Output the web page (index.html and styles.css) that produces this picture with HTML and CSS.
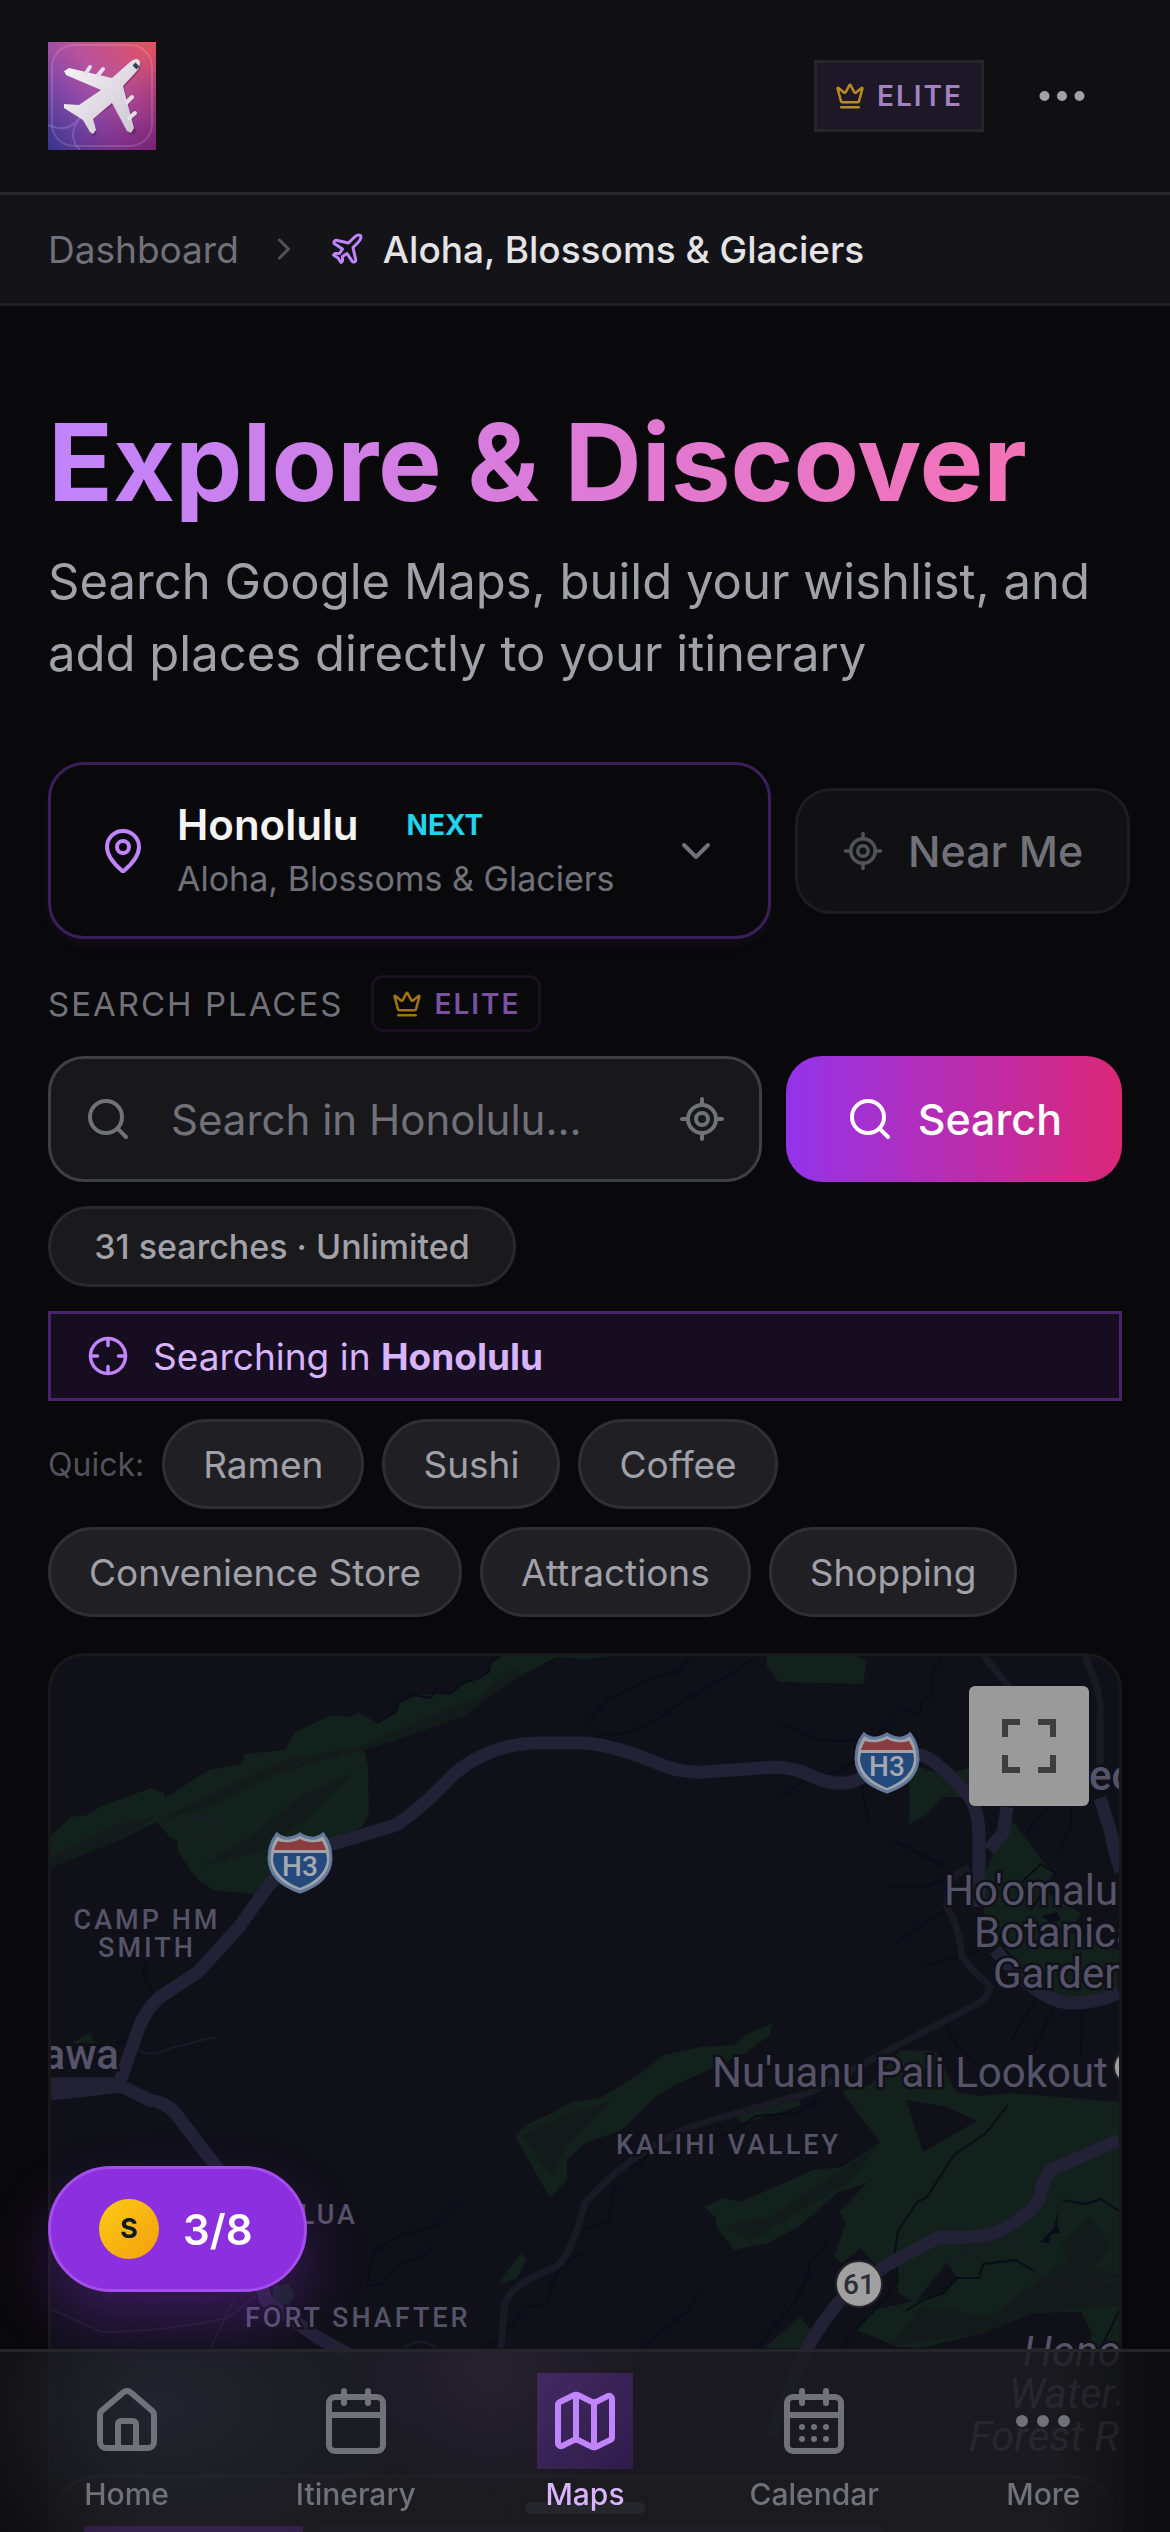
FILE: index.html
```html
<!DOCTYPE html>
<html lang="en">
<head>
    <meta charset="UTF-8">
    <meta name="viewport" content="width=device-width, initial-scale=1.0">
    <title>Explore &amp; Discover</title>
    <link rel="stylesheet" href="styles.css">
</head>
<body>
    <!-- Shared icons -->
    <svg class="sprite" aria-hidden="true">
        <symbol id="crown" viewBox="0 0 24 24">
            <path d="M11.562 3.266a.5.5 0 0 1 .876 0L15.39 8.87a1 1 0 0 0 1.516.294L21.183 5.5a.5.5 0 0 1 .798.519l-2.834 10.246a1 1 0 0 1-.956.734H5.81a1 1 0 0 1-.957-.734L2.02 6.02a.5.5 0 0 1 .798-.519l4.276 3.664a1 1 0 0 0 1.516-.294z"/>
            <path d="M5 21h14"/>
        </symbol>
        <symbol id="dots" viewBox="0 0 24 24">
            <circle cx="12" cy="12" r="1"/><circle cx="19" cy="12" r="1"/><circle cx="5" cy="12" r="1"/>
        </symbol>
        <symbol id="search" viewBox="0 0 24 24">
            <circle cx="11" cy="11" r="8"/><path d="m21 21-4.3-4.3"/>
        </symbol>
        <symbol id="locate" viewBox="0 0 24 24">
            <path d="M2 12h3M19 12h3M12 2v3M12 19v3"/><circle cx="12" cy="12" r="7"/><circle cx="12" cy="12" r="3"/>
        </symbol>
        <symbol id="shield" viewBox="0 0 66 62">
            <path d="M10 2Q16 7 22 6Q29 5 33 2Q37 5 44 6Q50 7 56 2Q64 12 64 27Q63 50 33 60Q3 50 2 27Q2 12 10 2Z" fill="#9fa3aa" stroke="#63799c" stroke-width="3"/>
            <path d="M7 21H59Q60 24 60 28Q58 46 33 56Q8 46 6 28Q6 24 7 21Z" fill="#23497d"/>
            <path d="M11 9Q17 11 24 10Q30 9 33 7Q36 9 42 10Q49 11 55 9Q58 14 59 18H7Q8 14 11 9Z" fill="#8a3c40"/>
        </symbol>
    </svg>

    <header class="topbar">
        <a class="logo" href="#" aria-label="Home">
            <svg viewBox="0 0 108 108">
                <defs>
                    <linearGradient id="logoBg" x1="0" y1="1" x2="1" y2="0">
                        <stop offset="0" stop-color="#33348c"/>
                        <stop offset=".35" stop-color="#8748a8"/>
                        <stop offset=".6" stop-color="#b9529c"/>
                        <stop offset="1" stop-color="#e5525a"/>
                    </linearGradient>
                    <linearGradient id="logoShade" x1=".3" y1=".3" x2="1" y2="1">
                        <stop offset=".3" stop-color="#7a1f78" stop-opacity="0"/>
                        <stop offset="1" stop-color="#701c6c" stop-opacity=".9"/>
                    </linearGradient>
                    <linearGradient id="plane" x1="0" y1="0" x2="1" y2="1">
                        <stop offset="0" stop-color="#f8f5f8"/>
                        <stop offset="1" stop-color="#cbc5d0"/>
                    </linearGradient>
                </defs>
                <rect width="108" height="108" fill="url(#logoBg)"/>
                <rect width="108" height="108" fill="url(#logoShade)"/>
                <rect x="4" y="3" width="100" height="101" rx="22" fill="none" stroke="#fff" stroke-opacity=".14" stroke-width="2"/>
                <path d="M0 83Q18 92 32 76M32 108Q18 94 32 76" fill="none" stroke="#a9a0e8" stroke-opacity=".3" stroke-width="2"/>
                <path d="M86 22Q94 15 92 28L76 45L88 91L82 93L65 63L43 78L49 92L45 94L36 78L18 66L18 62L33 65L55 49L17 32L17 27L65 37L79 25Z" fill="#3a1240" fill-opacity=".4"/>
                <path d="M82 20Q90 14 92 20Q92 26 88 30L75 44L86 86L83 91L79 89L64 61L45 77L48 88L45 92L42 90L35 78L16 66L16 62L31 63L53 48L18 33L16 29L21 26L64 36Z" fill="url(#plane)"/>
                <path d="M38 31L42 25M50 33L55 27M79 60L84 55M81 76L87 71" stroke="#e4dfe8" stroke-width="4" stroke-linecap="round"/>
                <path d="M86 22L90 26" stroke="#3b3f50" stroke-width="4"/>
            </svg>
        </a>
        <div class="topbar-actions">
            <span class="elite elite-square"><svg class="icon"><use href="#crown"/></svg>ELITE</span>
            <button class="more-btn" aria-label="More options"><svg class="icon"><use href="#dots"/></svg></button>
        </div>
    </header>

    <nav class="breadcrumb" aria-label="Breadcrumb">
        <a href="#">Dashboard</a>
        <svg class="icon crumb-sep" viewBox="0 0 24 24"><path d="m9 18 6-6-6-6"/></svg>
        <span class="crumb-current">
            <svg class="icon" viewBox="0 0 24 24"><path d="M17.8 19.2 16 11l3.5-3.5C21 6 21.5 4 21 3c-1-.5-3 0-4.5 1.5L13 8 4.8 6.2c-.5-.1-.9.1-1.1.5l-.3.5c-.2.5-.1 1 .3 1.3L9 12l-2 3H4l-1 1 3 2 2 3 1-1v-3l3-2 3.5 5.3c.3.4.8.5 1.3.3l.5-.2c.4-.3.6-.7.5-1.2z"/></svg>
            Aloha, Blossoms &amp; Glaciers
        </span>
    </nav>

    <main class="explore">
        <h1>Explore &amp; Discover</h1>
        <p class="subtitle">Search Google Maps, build your wishlist, and add places directly to your itinerary</p>

        <div class="location-row">
            <button class="location-card">
                <svg class="icon pin" viewBox="0 0 24 24"><path d="M20 10c0 4.993-5.539 10.193-7.399 11.799a1 1 0 0 1-1.202 0C9.539 20.193 4 14.993 4 10a8 8 0 0 1 16 0"/><circle cx="12" cy="10" r="3"/></svg>
                <span class="location-text">
                    <span class="location-name">Honolulu <span class="next">NEXT</span></span>
                    <span class="location-trip">Aloha, Blossoms &amp; Glaciers</span>
                </span>
                <svg class="icon" viewBox="0 0 24 24"><path d="m6 9 6 6 6-6"/></svg>
            </button>
            <button class="near-btn"><svg class="icon"><use href="#locate"/></svg>Near Me</button>
        </div>

        <div class="label-row">
            <label for="placeSearch">SEARCH PLACES</label>
            <span class="elite elite-soft"><svg class="icon"><use href="#crown"/></svg>ELITE</span>
        </div>

        <form class="search-row">
            <div class="search-box">
                <svg class="icon"><use href="#search"/></svg>
                <input type="text" id="placeSearch" placeholder="Search in Honolulu...">
                <button type="button" aria-label="Use my location"><svg class="icon"><use href="#locate"/></svg></button>
            </div>
            <button class="search-btn" type="submit"><svg class="icon"><use href="#search"/></svg>Search</button>
        </form>

        <div class="usage">31 searches · Unlimited</div>

        <div class="scope">
            <svg class="icon" viewBox="0 0 24 24"><circle cx="12" cy="12" r="10"/><path d="M22 12h-4M6 12H2M12 6V2M12 22v-4"/></svg>
            <span>Searching in <strong>Honolulu</strong></span>
        </div>

        <div class="quick">
            <span class="quick-label">Quick:</span>
            <button>Ramen</button>
            <button>Sushi</button>
            <button>Coffee</button>
            <button>Convenience Store</button>
            <button>Attractions</button>
            <button>Shopping</button>
        </div>

        <section class="map" aria-label="Map of Honolulu">
            <svg class="map-canvas" viewBox="0 0 1068 876" preserveAspectRatio="xMidYMin slice">
                <!-- Parks -->
                <g class="park">
                    <path d="M0 179L20 161L37 159L50 150L100 132L112 136L114 142L158 114L191 108L193 98L234 94L244 76L281 59L296 61L309 57L326 67L345 56L348 46L363 39L399 38L412 27L438 16L440 6L449 0H560L534 3L505 1L475 17L456 21L430 47L414 60L365 71L345 84L313 94L317 111L318 157L311 171L281 184L227 231L210 239L162 234L145 222L127 196L126 184L119 181L106 166L65 186L39 191L0 212Z"/>
                    <path d="M20 387L39 377L43 387Z"/>
                    <path d="M716 0V11L728 26L812 28L816 6L806 0Z"/>
                    <path d="M858 107V168L875 159L892 141H918V112L892 119Z"/>
                    <path d="M961 164L976 184L993 207L1004 217L997 237L1030 257L1019 277L1068 294V337L1027 342L993 337L956 294L933 261V217Z"/>
                    <path d="M721 368L719 379L694 397L657 414L620 431L601 444L571 474L534 487L516 504V524L499 542L464 480L475 469L501 457L520 446L549 442L590 417L612 399L650 391L683 389L698 377Z"/>
                    <path d="M849 394L885 395L905 436L930 440L960 437L1068 446V760L1050 730L1038 692L1041 677L1030 656L982 657L933 677L870 692L847 691L806 674L821 654L855 647L892 637L907 624L896 607L864 646L847 637L844 611L829 614L810 592L791 607L783 601L795 567L788 556L816 527L788 536L747 571L717 587L683 594L666 572L665 562L653 551L672 542L689 546L717 534L762 514L791 511L829 486L797 444L791 435L820 428Z"/>
                    <path d="M749 661L760 674L756 692H713Z"/>
                    <path d="M470 597L476 604L466 622L449 628L453 619Z"/>
                    <path d="M685 457L749 444V450L700 465L690 467Z"/>
                    <path d="M222 630L238 628L244 640L236 650L222 645Z"/>
                </g>
                <path class="land" d="M855 444L896 451L926 465L872 496Z"/>
                <!-- Relief shading -->
                <g class="relief">
                    <path d="M106 166L160 138L234 104L313 90L365 66L430 40L460 14L475 17L430 47L414 60L345 84L313 94L270 104L220 120L160 150Z"/>
                    <path d="M150 210L200 180L250 140L300 118L260 160L210 196Z"/>
                    <path d="M0 200L60 170L106 160L65 186L0 212Z"/>
                    <path d="M672 570L720 560L790 515L829 486L800 525L740 560L700 585Z"/>
                    <path d="M840 690L870 650L940 660L1020 600L1068 620V650L982 657L933 677Z"/>
                    <path d="M470 480L520 456L560 446L516 490L500 520Z"/>
                    <path d="M1010 590L1040 560L1060 590L1030 630Z"/>
                </g>
                <!-- Streams -->
                <g class="stream">
                    <path d="M326 67L345 56L348 46L363 39L380 42L384 32L399 38L412 27L428 22L438 16L440 6L449 0"/>
                    <path d="M534 70L556 44L600 22L626 16L640 0M544 80L575 77L606 64L632 45L680 18L705 0"/>
                    <path d="M890 0L881 20L880 42L872 43L868 61L848 49L840 64L820 84L783 85L770 84L750 76L730 67M830 88L790 114L750 126L730 142"/>
                    <path d="M810 125L818 168M842 184L870 198L892 210M836 230L876 231L892 223M845 287L890 256L900 257M875 309L930 294"/>
                    <path d="M974 178L998 150M1020 150V168L1007 197M970 227L990 208L1004 217L980 254M895 370L906 390L930 412M960 384L985 344M983 395L1005 345M1030 400L1032 350"/>
                    <path d="M957 449L935 477L903 499L876 541L866 546L847 575L844 596L847 625L824 654L806 672L790 692"/>
                    <path d="M855 655L870 645L893 637L905 622L928 622L932 608L965 604L985 616"/>
                    <path d="M1011 544L1035 548L1050 543L1068 555M1068 655L1050 692M776 588L759 606L757 621L742 648L705 692M646 636L638 654L590 692"/>
                    <path d="M768 444L745 457L705 460L680 477L655 482M571 505L590 510L600 492L634 497M534 573L558 565L562 535L568 530"/>
                    <path d="M534 596L512 607L500 630L495 648L475 652L450 680L435 692M407 547L385 570L345 581L322 597L316 630L330 628L350 608L375 598L380 590"/>
                    <path d="M95 306L92 320L107 345M65 388L82 380"/>
                </g>
                <path class="water" d="M1008 548L1006 570L1010 577L1000 578L998 587L989 586L1003 572ZM990 260L1006 256L1010 264L1000 266Z"/>
                <!-- Roads -->
                <g class="minor-road">
                    <path d="M933 0L960 34M1034 0Q1052 40 1049 60V111"/>
                    <path d="M918 212Q894 220 896 251Q908 270 911 300Q920 315 937 328Q944 340 915 354L870 377L758 437L721 447L638 471Q575 500 534 547Q520 600 505 611Q453 630 453 655L450 692"/>
                </g>
                <g class="track">
                    <path d="M88 394Q98 402 120 392L163 381L166 385M0 653L50 676Q110 676 177 662L205 640M182 645L160 692M353 692Q370 680 385 692"/>
                    <path d="M132 170L145 160L165 161L160 174L150 184"/>
                    <path d="M896 607L958 578M960 580Q985 610 986 617Q1025 640 1068 622"/>
                </g>
                <g class="highway">
                    <path d="M0 428H68Q77 402 88 371Q96 352 109 341L147 316L188 271L223 222L248 195L285 187L345 169Q371 152 404 117Q440 88 486 87H534Q564 89 616 111Q635 117 653 116L724 111Q745 112 758 119Q790 134 810 122L836 104L870 99Q885 103 918 140Q928 155 928 180V251"/>
                    <path d="M944 294Q989 347 1019 347T1068 336"/>
                    <path d="M956 151L952 177L938 194M1049 142L1060 177Q1064 200 1070 215"/>
                    <path d="M0 438L70 430L98 444Q115 446 125 458L180 530L215 645L266 681L300 700"/>
                    <path d="M1068 484L1000 514Q990 528 989 541Q980 560 944 577Q920 583 888 581L836 609L795 638Q770 665 752 700L720 780"/>
                </g>
                <!-- Place names -->
                <g class="place-small">
                    <text x="96" y="273" text-anchor="middle">CAMP HM</text>
                    <text x="96" y="301" text-anchor="middle">SMITH</text>
                    <text x="565" y="498">KALIHI VALLEY</text>
                    <text x="307" y="568" text-anchor="end">MOANALUA</text>
                    <text x="194" y="671">FORT SHAFTER</text>
                </g>
                <g class="place">
                    <text x="68" y="413" text-anchor="end" class="town">Halawa</text>
                    <text x="1038" y="134" class="town">eo</text>
                    <text x="893" y="249">Ho'omaluhia</text>
                    <text x="923" y="291">Botanical</text>
                    <text x="942" y="332">Garden</text>
                    <text x="661" y="431">Nu'uanu Pali Lookout</text>
                </g>
                <g class="place forest">
                    <text x="972" y="710">Honolulu</text>
                    <text x="958" y="752">Watershed</text>
                    <text x="918" y="795">Forest Reserve</text>
                </g>
                <circle cx="1080" cy="411" r="17" class="marker"/>
                <circle cx="808" cy="628" r="23" class="marker"/>
                <text x="808" y="638" class="route-text">61</text>
                <use href="#shield" x="216" y="176" width="66" height="62"/>
                <text x="249" y="220" class="shield-text">H3</text>
                <use href="#shield" x="803" y="76" width="66" height="62"/>
                <text x="836" y="120" class="shield-text">H3</text>
            </svg>
            <button class="fullscreen" aria-label="Toggle fullscreen">
                <svg viewBox="0 0 18 18"><path d="M0 0v6h2V2h4V0H0zm16 0h-4v2h4v4h2V0h-2zm0 16h-4v2h6v-6h-2v4zM2 12H0v6h6v-2H2v-4z"/></svg>
            </button>
            <div class="sheet">
                <div class="sheet-handle"></div>
                <div class="sheet-tabs">
                    <span class="tab tab-active"></span>
                    <span class="tab"></span>
                </div>
            </div>
        </section>
    </main>

    <button class="progress-pill"><span class="coin">S</span>3/8</button>

    <nav class="tabbar" aria-label="Main">
        <a href="#">
            <span class="tab-icon"><svg class="icon" viewBox="0 0 24 24"><path d="M15 21v-8a1 1 0 0 0-1-1h-4a1 1 0 0 0-1 1v8"/><path d="M3 10a2 2 0 0 1 .709-1.528l7-5.999a2 2 0 0 1 2.582 0l7 5.999A2 2 0 0 1 21 10v9a2 2 0 0 1-2 2H5a2 2 0 0 1-2-2z"/></svg></span>
            Home
        </a>
        <a href="#">
            <span class="tab-icon"><svg class="icon" viewBox="0 0 24 24"><path d="M8 2v4M16 2v4"/><rect width="18" height="18" x="3" y="4" rx="2"/><path d="M3 10h18"/></svg></span>
            Itinerary
        </a>
        <a href="#" class="active" aria-current="page">
            <span class="tab-icon"><svg class="icon" viewBox="0 0 24 24"><path d="M14.106 5.553a2 2 0 0 0 1.788 0l3.659-1.83A1 1 0 0 1 21 4.619v12.764a1 1 0 0 1-.553.894l-4.553 2.277a2 2 0 0 1-1.788 0l-4.212-2.106a2 2 0 0 0-1.788 0l-3.659 1.83A1 1 0 0 1 3 19.381V6.618a1 1 0 0 1 .553-.894l4.553-2.277a2 2 0 0 1 1.788 0z"/><path d="M15 5.764v15M9 3.236v15"/></svg></span>
            Maps
        </a>
        <a href="#">
            <span class="tab-icon"><svg class="icon" viewBox="0 0 24 24"><path d="M8 2v4M16 2v4"/><rect width="18" height="18" x="3" y="4" rx="2"/><path d="M3 10h18M8 14h.01M12 14h.01M16 14h.01M8 18h.01M12 18h.01M16 18h.01"/></svg></span>
            Calendar
        </a>
        <a href="#">
            <span class="tab-icon"><svg class="icon"><use href="#dots"/></svg></span>
            More
        </a>
    </nav>
</body>
</html>
```
FILE: styles.css
```css
:root {
    --bg: #09090b;
    --panel: #18181a;
    --line: #28282b;
    --text: #f4f4f5;
    --muted: #a1a1aa;
    --dim: #71717a;
    --faint: #52525b;
    --purple: #c084fc;
    --lilac: #d8b4fe;
}

* {
    box-sizing: border-box;
    margin: 0;
    padding: 0;
}

body {
    display: flex;
    flex-direction: column;
    min-height: 100vh;
    background: var(--bg);
    color: var(--text);
    font-family: Inter, sans-serif;
    font-size: 37px;
    overflow-x: hidden;
}

button,
input {
    font: inherit;
    color: inherit;
    background: none;
    border: none;
}

button {
    cursor: pointer;
}

a {
    color: inherit;
    text-decoration: none;
}

.sprite {
    position: absolute;
    width: 0;
    height: 0;
}

.icon {
    flex: none;
    width: 48px;
    height: 48px;
    fill: none;
    stroke: currentColor;
    stroke-width: 2;
    stroke-linecap: round;
    stroke-linejoin: round;
}

/* Header */
.topbar {
    display: flex;
    align-items: center;
    justify-content: space-between;
    padding: 42px 48px;
    background: #101012;
    border-bottom: 3px solid var(--line);
}

.logo,
.logo svg {
    display: block;
    width: 108px;
    height: 108px;
}

.topbar-actions {
    display: flex;
    align-items: center;
    gap: 18px;
}

.elite {
    display: flex;
    align-items: center;
    gap: 12px;
    padding: 0 18px;
    border: 3px solid #262629;
    font-size: 28px;
    font-weight: 600;
    letter-spacing: 2px;
}

.elite .icon {
    width: 30px;
    height: 30px;
}

.elite-square {
    height: 72px;
    background: #1e1728;
    color: #a383c2;
}

.elite-square .icon {
    color: #b98b20;
}

.elite-soft {
    height: 57px;
    border-color: #1a1022;
    border-radius: 12px;
    color: #7b51a3;
}

.elite-soft .icon {
    color: #a1730f;
}

.more-btn {
    display: flex;
    align-items: center;
    justify-content: center;
    width: 120px;
    height: 108px;
    color: var(--muted);
}

.more-btn .icon {
    width: 60px;
    height: 60px;
}

.breadcrumb {
    display: flex;
    align-items: center;
    gap: 27px;
    height: 111px;
    padding: 0 48px;
    background: #141418;
    border-bottom: 3px solid #1f1f22;
    color: var(--dim);
}

.breadcrumb .icon {
    width: 36px;
    height: 36px;
}

.crumb-sep {
    color: var(--faint);
}

.crumb-current {
    display: flex;
    align-items: center;
    gap: 18px;
    color: #e4e4e7;
    font-weight: 500;
}

.crumb-current .icon {
    color: var(--purple);
}

/* Page content */
.explore {
    display: flex;
    flex-direction: column;
    flex: 1;
    align-items: flex-start;
    padding: 96px 48px 0;
}

h1 {
    background: linear-gradient(90deg, #c084fc, #f472b6);
    -webkit-background-clip: text;
    background-clip: text;
    color: transparent;
    font-size: 107px;
    font-weight: 700;
    line-height: 120px;
}

.subtitle {
    margin-top: 24px;
    color: var(--muted);
    font-size: 49px;
    line-height: 72px;
}

.location-row {
    display: flex;
    align-items: center;
    gap: 24px;
    margin-top: 72px;
}

.location-card {
    display: flex;
    flex: none;
    align-items: center;
    gap: 30px;
    height: 177px;
    padding: 0 48px;
    border: 3px solid #3b1f5b;
    border-radius: 36px;
    box-shadow: 0 6px 12px rgba(147, 51, 234, 0.07);
    color: var(--dim);
    text-align: left;
}

.pin {
    color: var(--purple);
}

.location-text {
    display: flex;
    flex-direction: column;
    gap: 3px;
    min-width: 465px;
}

.location-name {
    display: flex;
    align-items: center;
    gap: 48px;
    color: var(--text);
    font-size: 42px;
    font-weight: 600;
    line-height: 54px;
}

.next {
    color: #22d3ee;
    font-size: 28px;
    font-weight: 700;
}

.location-trip {
    font-size: 34px;
    line-height: 48px;
}

.near-btn,
.search-btn {
    display: flex;
    flex: none;
    align-items: center;
    gap: 24px;
    height: 126px;
    border-radius: 36px;
    font-size: 43px;
    font-weight: 500;
}

.near-btn {
    padding: 0 44px;
    background: #111113;
    border: 3px solid #1d1d20;
    color: var(--dim);
}

.near-btn .icon {
    width: 42px;
    height: 42px;
    color: var(--faint);
}

.label-row {
    display: flex;
    align-items: center;
    gap: 28px;
    margin-top: 36px;
    color: var(--dim);
    font-size: 33px;
    letter-spacing: 2px;
}

.search-row {
    display: flex;
    gap: 24px;
    width: 100%;
    margin-top: 24px;
}

.search-box {
    display: flex;
    flex: 1;
    align-items: center;
    min-width: 0;
    height: 126px;
    padding: 0 33px;
    background: var(--panel);
    border: 3px solid #3f3f46;
    border-radius: 36px;
    color: var(--dim);
    font-size: 42px;
}

.search-box input {
    flex: 1;
    min-width: 0;
    padding: 0 39px;
    outline: none;
}

.search-box input::placeholder {
    color: var(--dim);
    opacity: 1;
}

.search-box button {
    display: flex;
}

.search-btn {
    padding: 0 60px;
    background: linear-gradient(90deg, #9333ea, #db2777);
    color: white;
}

.usage {
    min-width: 468px;
    height: 81px;
    margin-top: 24px;
    padding: 0 30px;
    background: #1a1a1c;
    border: 3px solid #29292c;
    border-radius: 42px;
    color: var(--muted);
    font-size: 34px;
    font-weight: 500;
    line-height: 75px;
    text-align: center;
}

.scope {
    display: flex;
    align-items: center;
    gap: 24px;
    width: 100%;
    height: 90px;
    margin-top: 24px;
    padding: 0 36px;
    background: #170d20;
    border: 3px solid #46236b;
    color: var(--lilac);
}

.scope .icon {
    width: 42px;
    height: 42px;
    color: var(--purple);
}

.quick {
    display: flex;
    flex-wrap: wrap;
    align-items: center;
    gap: 18px;
    margin-top: 18px;
}

.quick-label {
    color: var(--faint);
    font-size: 32px;
}

.quick button {
    height: 90px;
    padding: 0 38px;
    background: #202024;
    border: 3px solid #2f2f33;
    border-radius: 45px;
    color: var(--muted);
}

/* Map */
.map {
    position: relative;
    flex: 1;
    width: 100%;
    min-height: 800px;
    margin-top: 36px;
    overflow: hidden;
    background: #101018;
    border: 3px solid #18181b;
    border-bottom: none;
    border-radius: 36px 36px 0 0;
}

.map-canvas {
    position: absolute;
    inset: 0;
    width: 100%;
    height: 100%;
    font-family: Roboto, sans-serif;
}

.park {
    fill: #12211c;
}

.land {
    fill: #101018;
}

.relief {
    fill: #131b1a;
}

.water {
    fill: #090d19;
}

.stream,
.track,
.minor-road,
.highway {
    fill: none;
    stroke-linejoin: round;
}

.stream {
    stroke: #090d17;
    stroke-width: 2;
}

.track {
    stroke: #1b1a25;
    stroke-width: 2;
}

.minor-road {
    stroke: #1a1a24;
    stroke-width: 7;
}

.highway {
    stroke: #222136;
    stroke-width: 13;
}

.place-small,
.place {
    fill: #555368;
    stroke: #101018;
    stroke-width: 5;
    paint-order: stroke;
}

.place-small {
    font-size: 27px;
    font-weight: 500;
    letter-spacing: 3px;
}

.place {
    font-size: 42px;
}

.town {
    font-weight: 500;
}

.forest {
    font-style: italic;
}

.marker {
    fill: #a0a0a0;
    stroke: #25252b;
    stroke-width: 2;
}

.route-text {
    fill: #2b2e38;
    font-size: 28px;
    font-weight: 500;
    text-anchor: middle;
}

.shield-text {
    fill: #a5a9b2;
    font-size: 28px;
    font-weight: 500;
    text-anchor: middle;
}

.fullscreen {
    position: absolute;
    top: 30px;
    right: 30px;
    display: flex;
    align-items: center;
    justify-content: center;
    width: 120px;
    height: 120px;
    background: #9a9a9a;
    border-radius: 6px;
}

.fullscreen svg {
    width: 54px;
    height: 54px;
    fill: #3d3d3d;
}

/* Results sheet peeking up over the map */
.sheet {
    position: absolute;
    right: 0;
    bottom: 0;
    left: 0;
    height: 57px;
    overflow: hidden;
    background: #161616;
    border-top: 3px solid #2c2c2e;
    border-radius: 48px 48px 0 0;
}

.sheet-handle {
    width: 120px;
    height: 12px;
    margin: 24px auto 12px;
    background: #4c4c54;
    border-radius: 6px;
}

.sheet-tabs {
    display: flex;
    gap: 18px;
    padding: 0 33px;
}

.tab {
    width: 561px;
    height: 72px;
    background: #26262a;
}

.tab-active {
    width: 219px;
    background: #9333ea;
}

/* Floating progress */
.progress-pill {
    position: fixed;
    bottom: 240px;
    left: 48px;
    display: flex;
    align-items: center;
    gap: 24px;
    height: 126px;
    padding: 0 51px 0 48px;
    background: #8c2fdf;
    border: 3px solid #a44eec;
    border-radius: 63px;
    box-shadow: 0 30px 60px rgba(147, 51, 234, 0.3);
    color: white;
    font-size: 42px;
    font-weight: 600;
}

.coin {
    width: 60px;
    height: 60px;
    background: linear-gradient(135deg, #facc15, #f59e0b);
    border-radius: 50%;
    color: #111827;
    font-size: 27px;
    font-weight: 700;
    line-height: 60px;
    text-align: center;
}

/* Bottom navigation */
.tabbar {
    position: fixed;
    right: 0;
    bottom: 0;
    left: 0;
    display: grid;
    grid-template-columns: repeat(5, 1fr);
    height: 183px;
    padding: 21px 12px 0;
    background:
        radial-gradient(150px 130px at 42% 10%, rgba(70, 55, 85, 0.3), transparent),
        radial-gradient(260px 160px at 14% 30%, rgba(50, 50, 65, 0.4), transparent),
        linear-gradient(90deg, rgba(16, 16, 18, 0.8), rgba(28, 28, 34, 0.8) 12%, rgba(28, 28, 34, 0.8) 90%, rgba(14, 14, 16, 0.8));
    border-top: 3px solid #252529;
}

.tabbar a {
    display: flex;
    flex-direction: column;
    align-items: center;
    gap: 6px;
    color: var(--dim);
    font-size: 30px;
    font-weight: 500;
    line-height: 39px;
}

.tab-icon {
    display: flex;
    align-items: center;
    justify-content: center;
    width: 96px;
    height: 96px;
}

.tab-icon .icon {
    width: 72px;
    height: 72px;
}

.tabbar .active {
    color: var(--lilac);
}

.active .tab-icon {
    background: linear-gradient(135deg, #422a60, #2f1c4b);
    color: var(--purple);
}
```
